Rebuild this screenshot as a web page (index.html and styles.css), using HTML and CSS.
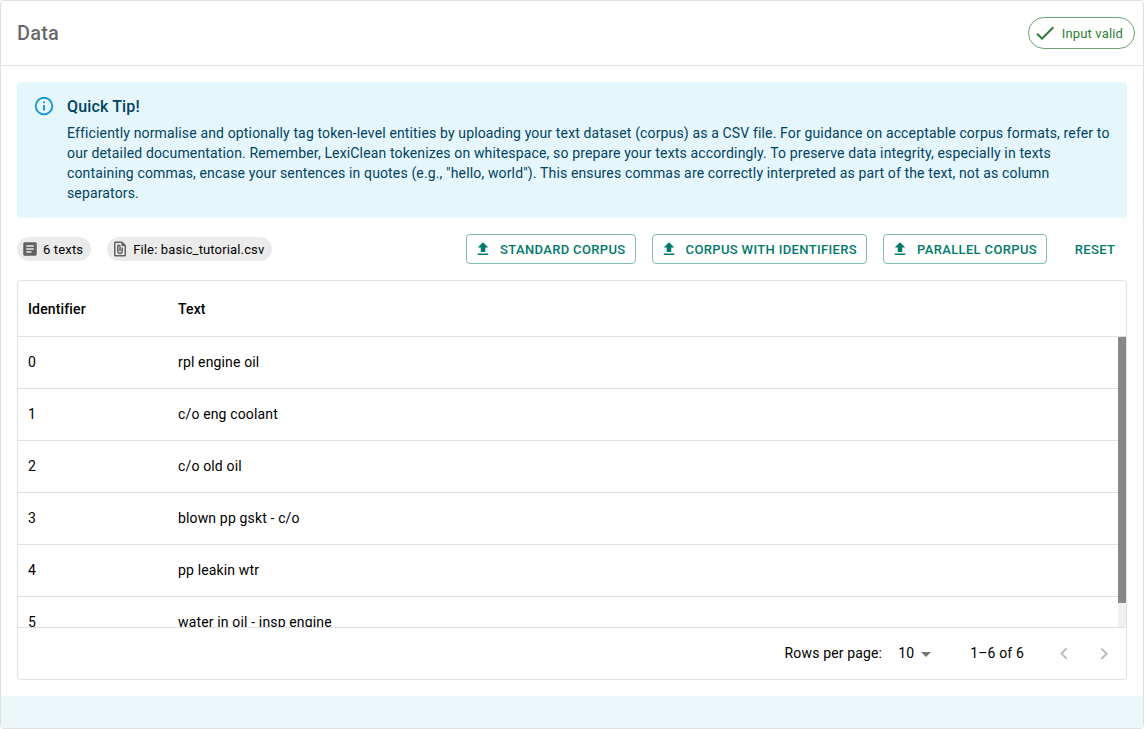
FILE: index.html
```html
<!DOCTYPE html>
<html lang="en">
<head>
<meta charset="utf-8">
<title>Data</title>
<link rel="stylesheet" href="styles.css">
</head>
<body>
<svg width="0" height="0" class="defs">
  <symbol id="upload" viewBox="0 0 24 24"><path d="M5 20h14v-2H5v2zm0-10h4v6h6v-6h4l-7-7-7 7z"/></symbol>
</svg>
<main class="card">
  <header class="card-header">
    <h1 class="card-title">Data</h1>
    <div class="chip-valid">
      <svg class="icon-24" viewBox="0 0 24 24"><path d="M9 16.2 4.8 12l-1.4 1.4L9 19 21 7l-1.4-1.4z"/></svg>
      <span>Input valid</span>
    </div>
  </header>
  <div class="card-body">
    <section class="alert">
      <svg class="alert-icon" viewBox="0 0 24 24"><path d="M11,9H13V7H11M12,20C7.59,20 4,16.41 4,12C4,7.59 7.59,4 12,4C16.41,4 20,7.59 20,12C20,16.41 16.41,20 12,20M12,2A10,10 0 0,0 2,12A10,10 0 0,0 12,22A10,10 0 0,0 22,12A10,10 0 0,0 12,2M11,17H13V11H11V17Z"/></svg>
      <div class="alert-message">
        <h2 class="alert-title">Quick Tip!</h2>
        <p class="alert-text">Efficiently normalise and optionally tag token-level entities by uploading your text dataset (corpus) as a CSV file. For guidance on acceptable corpus formats, refer to our detailed documentation. Remember, LexiClean tokenizes on whitespace, so prepare your texts accordingly. To preserve data integrity, especially in texts containing commas, encase your sentences in quotes (e.g., "hello, world"). This ensures commas are correctly interpreted as part of the text, not as column separators.</p>
      </div>
    </section>
    <div class="toolbar">
      <div class="group">
        <div class="chip"><svg class="icon-18" viewBox="0 0 24 24"><path d="M19 3H5c-1.1 0-2 .9-2 2v14c0 1.1.9 2 2 2h14c1.1 0 2-.9 2-2V5c0-1.1-.9-2-2-2zm-5 14H7v-2h7v2zm3-4H7v-2h10v2zm0-4H7V7h10v2z"/></svg><span>6 texts</span></div>
        <div class="chip"><svg class="icon-18" viewBox="0 0 24 24"><path d="M15 2H6c-1.1 0-2 .9-2 2v16c0 1.1.9 2 2 2h12c1.1 0 2-.9 2-2V7l-5-5zM6 20V4h8v4h4v12H6zm10-10v5c0 2.21-1.79 4-4 4s-4-1.79-4-4V8.5c0-1.47 1.26-2.64 2.76-2.49 1.3.13 2.24 1.32 2.24 2.63V15h-2V8.5c0-.28-.22-.5-.5-.5s-.5.22-.5.5V15c0 1.1.9 2 2 2s2-.9 2-2v-5h2z"/></svg><span>File: basic_tutorial.csv</span></div>
      </div>
      <div class="group">
        <button class="button outlined"><svg class="icon-18"><use href="#upload"/></svg><span>Standard Corpus</span></button>
        <button class="button outlined"><svg class="icon-18"><use href="#upload"/></svg><span>Corpus with identifiers</span></button>
        <button class="button outlined"><svg class="icon-18"><use href="#upload"/></svg><span>Parallel Corpus</span></button>
        <button class="button text"><span>Reset</span></button>
      </div>
    </div>
    <section class="grid">
      <div class="grid-head"><span>Identifier</span><span>Text</span></div>
      <div class="grid-scroller">
        <div class="rows">
          <div class="row"><span>0</span><span>rpl engine oil</span></div>
          <div class="row"><span>1</span><span>c/o eng coolant</span></div>
          <div class="row"><span>2</span><span>c/o old oil</span></div>
          <div class="row"><span>3</span><span>blown pp gskt - c/o</span></div>
          <div class="row"><span>4</span><span>pp leakin wtr</span></div>
          <div class="row"><span>5</span><span>water in oil - insp engine</span></div>
        </div>
        <div class="scrollbar"><div class="thumb"></div></div>
      </div>
      <footer class="grid-footer">
        <span class="footer-text">Rows per page:</span>
        <span class="page-size"><span class="footer-text">10</span><svg class="icon-24" viewBox="0 0 24 24"><path d="M7 10l5 5 5-5z"/></svg></span>
        <span class="footer-text page-range">1–6 of 6</span>
        <span class="page-button"><svg class="icon-24" viewBox="0 0 24 24"><path d="M15.41 16.09l-4.58-4.59 4.58-4.59L14 5.5l-6 6 6 6z"/></svg></span>
        <span class="page-button"><svg class="icon-24" viewBox="0 0 24 24"><path d="M8.59 16.34l4.58-4.59-4.58-4.59L10 5.75l6 6-6 6z"/></svg></span>
      </footer>
    </section>
  </div>
  <div class="card-strip"></div>
</main>
</body>
</html>
```
FILE: styles.css
```css
* { box-sizing: border-box; }
body {
  margin: 0;
  background: #fff;
  color: #000;
  font: 400 16px/1.5 Roboto, sans-serif;
  letter-spacing: 0.00938em;
}
h1, h2, p { margin: 0; }
svg { fill: currentColor; flex: none; display: block; }
.defs { display: none; }
.icon-24 { width: 24px; height: 24px; }
.icon-18 { width: 18px; height: 18px; }

.card {
  display: flex;
  flex-direction: column;
  height: 729px;
  border: 1px solid #e0e0e0;
  border-radius: 4px;
  overflow: hidden;
}
.card-header {
  display: flex;
  align-items: center;
  justify-content: space-between;
  height: 65px;
  flex: none;
  padding: 0 8px 0 16px;
  border-bottom: 1px solid #e0e0e0;
}
.card-title {
  font-size: 20px;
  font-weight: 500;
  line-height: 1.6;
  letter-spacing: 0.0075em;
  color: rgba(0, 0, 0, 0.6);
}
.chip-valid {
  display: flex;
  align-items: center;
  gap: 5px;
  height: 32px;
  padding: 0 11px 0 4px;
  border: 1px solid rgba(46, 125, 50, 0.7);
  border-radius: 16px;
  color: #2e7d32;
  font-size: 13px;
}
.chip-valid span, .chip span { line-height: 20px; padding-top: 1px; }
.card-body { flex: 1; padding: 16px 16px 0; }
.card-strip { height: 32px; flex: none; background: #edf6f8; }

.alert {
  display: flex;
  gap: 12px;
  height: 136px;
  padding: 6px 16px;
  border-radius: 4px;
  background: #e5f6fd;
  color: #014361;
}
.alert-icon { width: 22px; height: 22px; margin-top: 7px; color: #0288d1; opacity: 0.9; }
.alert-message { padding: 8px 0; }
.alert-title {
  margin: -1px 0 4px;
  font-size: 16px;
  font-weight: 500;
  line-height: 24px;
  letter-spacing: 0.00938em;
}
.alert-text { font-size: 14px; line-height: 20px; letter-spacing: 0.0104em; }

.toolbar {
  display: flex;
  align-items: center;
  justify-content: space-between;
  height: 30px;
  margin: 16px 0;
}
.group { display: flex; align-items: center; gap: 16px; }
.chip {
  display: flex;
  align-items: center;
  gap: 4px;
  height: 24px;
  padding: 0 8px 0 4px;
  border-radius: 12px;
  background: #ebebeb;
  font-size: 13px;
}
.chip svg { color: #616161; }
.button {
  display: inline-flex;
  align-items: center;
  justify-content: center;
  gap: 8px;
  min-width: 64px;
  height: 30px;
  background: none;
  color: #00796b;
  font: 500 13px/22px Roboto, sans-serif;
  letter-spacing: 0.355px;
  text-transform: uppercase;
}
.button span { padding-top: 1px; }
.outlined {
  padding: 0 9px 0 7px;
  border: 1px solid rgba(0, 121, 107, 0.5);
  border-radius: 4px;
}
.text { padding: 0 5px; border: 0; }

.grid {
  display: flex;
  flex-direction: column;
  height: 400px;
  border: 1px solid #e0e0e0;
  border-radius: 4px;
  font-size: 14px;
  line-height: 20px;
  letter-spacing: 0.01071em;
}
.grid-head, .row {
  display: grid;
  grid-template-columns: 150px 1fr;
  align-items: center;
  padding-left: 10px;
  border-bottom: 1px solid #e0e0e0;
}
.grid-head { height: 56px; flex: none; padding-top: 1px; font-weight: 500; }
.grid-scroller { display: flex; flex: 1; min-height: 0; overflow: hidden; }
.rows { flex: 1; }
.row { height: 52px; padding-bottom: 1px; }
.scrollbar { width: 8px; background: #f1f1f1; }
.thumb { height: 266px; background: #888; }
.grid-footer {
  display: flex;
  align-items: center;
  justify-content: flex-end;
  height: 52px;
  flex: none;
  padding: 1px 2px 0 0;
  border-top: 1px solid #e0e0e0;
}
.footer-text { padding-bottom: 2px; }
.page-size { display: flex; align-items: center; margin: 0 32px 0 16px; }
.page-size svg { color: rgba(0, 0, 0, 0.54); }
.page-range { margin-right: 20px; }
.page-button { padding: 8px; color: rgba(0, 0, 0, 0.26); }
```
